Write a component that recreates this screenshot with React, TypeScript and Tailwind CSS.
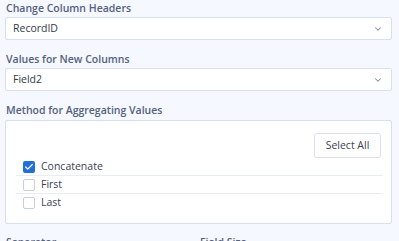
import React from "react";
import { ChevronDown, Check } from "lucide-react";

const options = [
  { label: "Concatenate", checked: true },
  { label: "First", checked: false },
  { label: "Last", checked: false },
];

function Dropdown({ value }: { value: string }) {
  return (
    <div className="mt-[2px] h-[23px] w-[387px] ml-[5px] flex items-center justify-between bg-white border border-[#d9dfee] rounded-[2px] pl-[7px] pr-[8px] text-[10.5px] text-[#333a48]">
      <span>{value}</span>
      <ChevronDown className="w-[10px] h-[10px] text-[#7f8cab]" strokeWidth={2.5} />
    </div>
  );
}

export default function App() {
  return (
    <div
      className="w-[399px] h-[241px] overflow-hidden bg-[#f5f8fe] pt-[1px]"
      style={{ fontFamily: '"Open Sans", "Noto Sans", sans-serif' }}
    >
      <div className="ml-[6px] text-[10.5px] font-semibold text-[#54617f] leading-[14px]">Change Column Headers</div>
      <Dropdown value="RecordID" />
      <div className="mt-[12px] ml-[6px] text-[10.5px] font-semibold text-[#54617f] leading-[14px]">Values for New Columns</div>
      <Dropdown value="Field2" />
      <div className="mt-[12px] ml-[6px] text-[10.5px] font-semibold text-[#54617f] leading-[14px]">Method for Aggregating Values</div>
      <div className="mt-[3px] ml-[5px] w-[387px] h-[104px] bg-white border border-[#d9dfee] rounded-[2px] pt-[12px]">
        <div className="flex justify-end pr-[10px]">
          <button className="w-[67px] h-[25px] border border-[#d9dfee] rounded-[3px] bg-white text-[10.5px] text-[#3c4252]">
            Select All
          </button>
        </div>
        <div className="ml-[10px] mr-[8px]">
          {options.map((o, i) => (
            <div
              key={o.label}
              className={`h-[18px] flex items-center pl-[7px] ${i < options.length - 1 ? "border-b border-[#e8ecf4]" : ""}`}
            >
              {o.checked ? (
                <span className="w-[12px] h-[12px] rounded-[2px] bg-[#1f6fd6] flex items-center justify-center">
                  <Check className="w-[10px] h-[10px] text-white" strokeWidth={3} />
                </span>
              ) : (
                <span className="w-[12px] h-[12px] rounded-[2px] border border-[#c8cfe0] bg-white" />
              )}
              <span className="ml-[6px] text-[10.5px] text-[#3c4252]">{o.label}</span>
            </div>
          ))}
        </div>
      </div>
      <div className="mt-[11px] flex text-[10.5px] font-semibold text-[#54617f] leading-[14px]">
        <span className="ml-[6px] w-[194px]">Separator</span>
        <span>Field Size</span>
      </div>
    </div>
  );
}
